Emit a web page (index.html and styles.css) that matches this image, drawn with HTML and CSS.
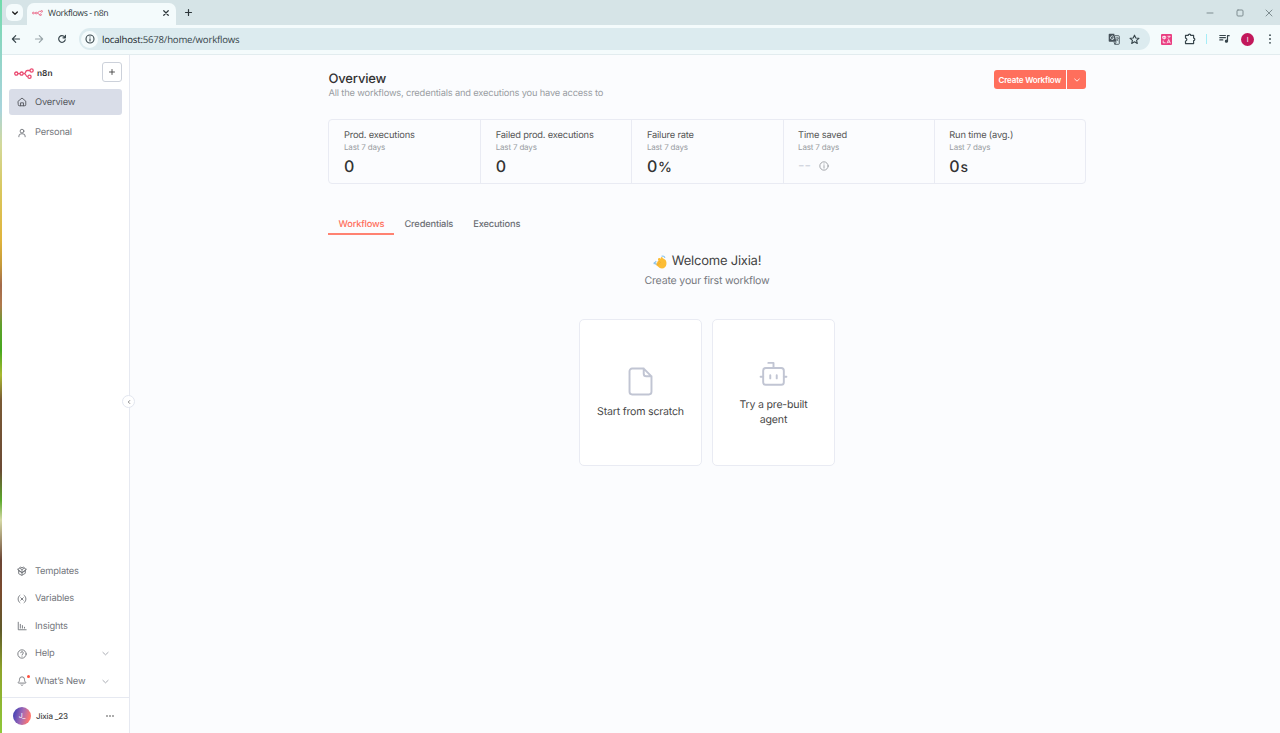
FILE: index.html
```
<!DOCTYPE html>
<html lang="en">
  <head>
    <meta charset="UTF-8" />
    <meta name="viewport" content="width=device-width, initial-scale=1.0" />
    <title>Workflows - n8n</title>
    <link rel="stylesheet" href="styles.css">
  </head>
  <body>
    <svg class="defs" width="0" height="0">
      <symbol id="logo" viewBox="0 0 20 11">
        <g fill="none" stroke="#ea4b71" stroke-width="1.3">
          <circle cx="2.300" cy="5.600" r="1.600" />
          <circle cx="7.600" cy="5.600" r="1.600" />
          <circle cx="17.600" cy="2.500" r="1.600" />
          <circle cx="15.500" cy="8.700" r="1.600" />
          <path d="M3.900 5.600H6M9.200 5.600h1c2 0 .6-3.100 3.200-3.100H16M10.200 5.600c2.500 0 .9 3.100 3.700 3.100" />
        </g>
      </symbol>
      <symbol id="chevron-down" viewBox="0 0 24 24">
        <path d="m5 9 7 6.500L19 9" />
      </symbol>
    </svg>

    <div class="desktop">
      <div class="browser">
        <div class="tab-bar">
          <button class="tab-search">
            <svg class="icon" width="8" height="8" viewBox="0 0 24 24" stroke-width="4"><path d="m5 9 7 7 7-7" /></svg>
          </button>
          <div class="tab">
            <svg width="11" height="6"><use href="#logo" /></svg>
            <span class="tab-title">Workflows - n8n</span>
            <svg class="icon" width="6" height="6" viewBox="0 0 8 8" stroke-width="1.6"><path d="m1 1 6 6M7 1 1 7" /></svg>
          </div>
          <svg class="icon new-tab" width="9" height="9" viewBox="0 0 9 9" stroke-width="1.2"><path d="M4.500 1.500v6M1.500 4.500h6" /></svg>
          <div class="window-buttons">
            <svg class="icon" width="8" height="8" viewBox="0 0 8 8"><path d="M1 4h6" /></svg>
            <svg class="icon" width="8" height="8" viewBox="0 0 8 8"><rect x="1" y="1" width="6" height="6" rx="1" /></svg>
            <svg class="icon" width="8" height="8" viewBox="0 0 8 8"><path d="m1 1 6 6M7 1 1 7" /></svg>
          </div>
        </div>

        <div class="toolbar">
          <svg class="icon back" width="10" height="10" viewBox="0 0 10 10" stroke-width="1.2"><path d="M8.500 5h-7M4.700 1.700 1.400 5l3.300 3.300" /></svg>
          <svg class="icon forward" width="10" height="10" viewBox="0 0 10 10" stroke-width="1.2"><path d="M1.500 5h7M5.300 1.700 8.600 5 5.300 8.300" /></svg>
          <svg class="icon reload" width="10" height="10" viewBox="0 0 10 10" stroke-width="1.2"><path d="M8.200 5.800A3.300 3.300 0 1 1 7.600 3l.7.7M8.400 1.400v2.400H6" /></svg>
          <div class="address">
            <span class="site-info">
              <svg class="icon" width="10" height="10" viewBox="0 0 10 10" stroke-width="1.1"><circle cx="5" cy="5" r="4" /><path d="M5 4.700v2.300M5 2.900v.1" /></svg>
            </span>
            <span class="url"><span class="host">localhost:</span>5678/home/workflows</span>
            <svg class="translate" width="12" height="12" viewBox="0 0 12 12">
              <path d="M1.500.7h4.700l2.300 8H1.500a.8.8 0 0 1-.8-.8V1.500a.8.8 0 0 1 .8-.8z" fill="#46525a" />
              <path d="M7 2.700h3.500a.8.8 0 0 1 .8.8v7a.8.8 0 0 1-.8.8H6.800l1.400-2.300M6.800 11.300 6 9" fill="none" stroke="#46525a" stroke-width=".9" />
              <path d="M5.700 3.900A1.700 1.700 0 1 0 5.900 5H4.400" fill="none" stroke="#dcebef" stroke-width=".9" />
              <path d="M7.700 5h3M9.200 4.200V5M10.300 5c-.3 1.400-1.200 2.200-2 2.700M8.300 6l2 2.200" fill="none" stroke="#46525a" stroke-width=".7" />
            </svg>
            <svg class="icon" width="11" height="11" viewBox="0 0 24 24" stroke-width="2.4"><path d="m12 2.500 2.800 6.300 6.900.6-5.200 4.500 1.600 6.700L12 17l-6.100 3.600 1.600-6.700-5.200-4.500 6.900-.6z" /></svg>
          </div>
          <svg class="extension" width="11" height="11" viewBox="0 0 11 11">
            <rect width="11" height="11" rx="1" fill="#ea3f82" />
            <path d="M1.700 2.500h3v1.800h-3zM3.200 1.700v3.800M6.500 2.300h2.700L7 4.500M2.200 6.500v2.300h2.300M6 9.300l1.700-3.800 1.700 3.800M6.700 8.200h2" fill="none" stroke="#fff" stroke-width=".8" />
          </svg>
          <svg class="icon puzzle" width="12" height="12" viewBox="0 0 12 12" stroke-width="1.2"><path d="M1.500 2.400h2.700c0-1.700 2.600-1.700 2.600 0h2.800v2.700c1.600 0 1.600 2.500 0 2.500v3H1.500V8c1.800 0 1.800-2.900 0-2.900z" /></svg>
          <span class="toolbar-divider"></span>
          <svg class="icon media" width="11" height="10" viewBox="0 0 11 10" stroke-width="1.2"><path d="M.8 1.500h5.600M.8 3.700h5.600M.8 5.900h3M8.500 7.200V1.700h1.700" /><circle cx="7.400" cy="7.200" r="1" fill="currentColor" /></svg>
          <span class="profile">I</span>
          <svg class="menu" width="4" height="10" viewBox="0 0 4 10"><circle cx="2" cy="1.200" r=".9" /><circle cx="2" cy="5" r=".9" /><circle cx="2" cy="8.800" r=".9" /></svg>
        </div>

        <div class="app">
          <aside class="sidebar">
            <div class="sidebar-header">
              <svg class="brand-logo" width="20" height="11"><use href="#logo" /></svg>
              <span class="brand">n8n</span>
              <button class="add-button">
                <svg class="icon" width="10" height="10" viewBox="0 0 10 10" stroke-width=".9"><path d="M5 2.500v5M2.500 5h5" /></svg>
              </button>
            </div>

            <nav class="nav-main">
              <a class="nav-item active">
                <svg class="icon" viewBox="0 0 24 24"><path d="M3 10 12 2.500 21 10v9a2 2 0 0 1-2 2H5a2 2 0 0 1-2-2zM8.500 21v-7h7v7" /></svg>
                <span>Overview</span>
              </a>
              <a class="nav-item">
                <svg class="icon" viewBox="0 0 24 24"><circle cx="12" cy="7.500" r="4.500" /><path d="M4.500 21v-1.500a5.500 5.500 0 0 1 5.500-5.500h4a5.500 5.500 0 0 1 5.500 5.500V21" /></svg>
                <span>Personal</span>
              </a>
            </nav>

            <nav class="nav-bottom">
              <a class="nav-item">
                <svg class="icon" viewBox="0 0 24 24"><path d="m12 22 8-4.500v-6L12 16l-8-4.500v6zM12 16v6M4 11.500 2 8l4-3 6 3.500L18 5l4 3-2 3.500M2 8l10 8L22 8M6 5l3-2.500 3 2 3-2L18 5M12 8.500V16" /></svg>
                <span>Templates</span>
              </a>
              <a class="nav-item">
                <svg class="icon" viewBox="0 0 24 24"><path d="M7 3C1 7 1 17 7 21M17 3c6 4 6 14 0 18M9 9l6 6M15 9l-6 6" /></svg>
                <span>Variables</span>
              </a>
              <a class="nav-item">
                <svg class="icon" viewBox="0 0 24 24"><path d="M3 3v18h19M8 8v9M13 11v6M18 15v2" /></svg>
                <span>Insights</span>
              </a>
              <a class="nav-item">
                <svg class="icon" viewBox="0 0 24 24"><circle cx="12" cy="12" r="10" /><path d="M9 9a3 3 0 0 1 6 .8c0 2-3 2.500-3 4M12 17v.3" /></svg>
                <span>Help</span>
                <svg class="icon arrow"><use href="#chevron-down" /></svg>
              </a>
              <a class="nav-item has-news">
                <svg class="icon" viewBox="0 0 24 24"><path d="M10 21.500a2.300 2.300 0 0 0 4 0M3.500 17c-.8 0-1-1-.5-1.500C4.500 14 6 12.500 6 8a6 6 0 0 1 12 0c0 4.500 1.500 6 3 7.500.5.5.3 1.500-.5 1.500z" /></svg>
                <span>What’s New</span>
                <svg class="icon arrow"><use href="#chevron-down" /></svg>
              </a>
            </nav>

            <div class="user">
              <span class="avatar">J_</span>
              <span class="user-name">Jixia _23</span>
              <svg class="menu" width="8" height="4" viewBox="0 0 8 4"><circle cx="1" cy="2" r=".8" /><circle cx="4" cy="2" r=".8" /><circle cx="7" cy="2" r=".8" /></svg>
            </div>

            <button class="collapse">
              <svg class="icon" width="6" height="6" viewBox="0 0 24 24" stroke-width="3.5"><path d="m15 6-6 6 6 6" /></svg>
            </button>
          </aside>

          <main class="content">
            <div class="page">
              <header class="page-header">
                <div>
                  <h1>Overview</h1>
                  <p class="subtitle">All the workflows, credentials and executions you have access to</p>
                </div>
                <div class="create">
                  <button class="create-main">Create Workflow</button>
                  <button class="create-more">
                    <svg class="icon" width="8" height="8" stroke-width="2.5"><use href="#chevron-down" /></svg>
                  </button>
                </div>
              </header>

              <ul class="insights">
                <li>
                  <strong>Prod. executions</strong>
                  <small>Last 7 days</small>
                  <div class="value">0</div>
                </li>
                <li>
                  <strong>Failed prod. executions</strong>
                  <small>Last 7 days</small>
                  <div class="value">0</div>
                </li>
                <li>
                  <strong>Failure rate</strong>
                  <small>Last 7 days</small>
                  <div class="value">0<em>%</em></div>
                </li>
                <li>
                  <strong>Time saved</strong>
                  <small>Last 7 days</small>
                  <div class="value empty">
                    <span>--</span>
                    <svg class="icon" width="10" height="10" viewBox="0 0 24 24"><circle cx="12" cy="12" r="10" /><path d="M12 11v6M12 7v.5" /></svg>
                  </div>
                </li>
                <li>
                  <strong>Run time (avg.)</strong>
                  <small>Last 7 days</small>
                  <div class="value">0<em>s</em></div>
                </li>
              </ul>

              <div class="tabs">
                <a class="selected">Workflows</a>
                <a>Credentials</a>
                <a>Executions</a>
              </div>

              <section class="welcome">
                <h2>
                  <svg width="14" height="14" viewBox="0 0 14 14">
                    <path d="M5.500 3.300c1-.6 1.700 0 2 .7l.4-1.500c.4-1 1.700-.7 1.600.4l2.400 1.600c1.300 1 1.800 2.600 1.500 4.700-.3 2.500-2 4.200-4.500 4.200-1.700 0-2.500-.8-3.600-1.700L3 9.900c-.8-.8 0-1.700.9-1.300-.7-.9.1-1.600.8-1.300-.5-.9.2-1.500.9-1.200-.7-1.100-.8-2.100-.1-2.800z" fill="#fcbd35" />
                    <path d="m5.800 6 2.300 1.800M4.900 7.500l2.300 1.600M4 8.900l2 1.400" stroke="#e99a21" stroke-width=".4" />
                    <path d="M.8 7.500 3.600 9.600M3.200 6.200.8 9.200M8.500 1.300c1.500-.5 3 0 3.400 1.500" fill="none" stroke="#8fc6ee" stroke-width="1.2" />
                  </svg>
                  Welcome Jixia!
                </h2>
                <p>Create your first workflow</p>
                <div class="cards">
                  <div class="card">
                    <svg class="icon" width="31" height="31" viewBox="0 0 24 24" stroke-width="1.5"><path d="M14.500 2H5.500a2 2 0 0 0-2 2v16a2 2 0 0 0 2 2h13a2 2 0 0 0 2-2V8zM14.500 2v4a2 2 0 0 0 2 2h4" /></svg>
                    <span>Start from scratch</span>
                  </div>
                  <div class="card">
                    <svg class="icon" width="31" height="31" viewBox="0 0 24 24" stroke-width="1.5"><path d="M12 7V3H8M2 13.800h2M20 13.800h2M9.500 12.500V15M14.500 12.500V15" /><rect x="4" y="7" width="16" height="13" rx="2" /></svg>
                    <span>Try a pre-built agent</span>
                  </div>
                </div>
              </section>
            </div>
          </main>
        </div>
      </div>
    </div>
  </body>
</html>
```

FILE: styles.css
```
* {
  box-sizing: border-box;
}
body {
  margin: 0;
  font-family: Inter, "Open Sans", sans-serif;
  font-size: 9.3px;
  letter-spacing: -0.17px;
  color: #555;
  text-rendering: geometricPrecision;
}
h1,
h2,
p,
ul {
  margin: 0;
  padding: 0;
}
button {
  display: flex;
  align-items: center;
  justify-content: center;
  padding: 0;
  border: none;
  font-family: inherit;
  letter-spacing: inherit;
}
svg {
  flex-shrink: 0;
}
.defs {
  position: absolute;
}
.icon {
  fill: none;
  stroke: currentColor;
  stroke-linecap: round;
  stroke-linejoin: round;
}
.menu {
  fill: currentColor;
}

/* wallpaper visible to the left of the window */
.desktop {
  height: 733px;
  padding-left: 2px;
  overflow: hidden;
  background: linear-gradient(#6fdcab 0, #8fd5c5 50px, #a9d4dc 110px, #d3d99a 145px, #d9c75e 190px, #e0b43c 240px, #c59a3a 265px, #a36a4b 285px, #b0794c 305px, #5fa02c 325px, #46a81e 350px, #a9b930 375px, #7a5a35 400px, #6b4a35 470px, #5aa82a 500px, #d5d9a5 520px, #6b4535 560px, #7a4a2e 590px, #5f5a2a 630px, #8ea52a 670px, #8fc83a 733px);
}
.browser {
  display: flex;
  flex-direction: column;
  height: 100%;
  background: #fbfcfe;
}

/* browser chrome */
.tab-bar {
  display: flex;
  align-items: center;
  height: 25px;
  padding: 0 7px 0 4px;
  background: #d6e4e7;
  color: #2c363a;
}
.tab-search {
  width: 17px;
  height: 17px;
  border-radius: 6px;
  background: #f4fbfc;
  color: #222;
}
.tab {
  display: flex;
  align-items: center;
  align-self: flex-end;
  width: 149px;
  height: 22px;
  margin-left: 4px;
  padding: 0 7px 2px 5px;
  border-radius: 7px 7px 0 0;
  background: #f4fbfc;
}
.tab-title {
  flex: 1;
  margin-left: 5px;
  font-family: "Open Sans", sans-serif;
  font-size: 8.7px;
  letter-spacing: -0.35px;
}
.new-tab {
  margin-left: 8px;
}
.window-buttons {
  display: flex;
  gap: 21.5px;
  margin-left: auto;
  color: #7f8d91;
}
.toolbar {
  display: flex;
  align-items: center;
  height: 30px;
  padding: 0 8px 1px 9px;
  border-bottom: 1px solid #e2ecef;
  background: #f4fbfc;
  color: #37454b;
}
.forward {
  margin-left: 13px;
  color: #9aa6aa;
}
.reload {
  margin-left: 13px;
}
.address {
  display: flex;
  align-items: center;
  width: 1071px;
  height: 22px;
  margin-left: 12px;
  padding: 0 10px 0 2px;
  border-radius: 11px;
  background: #dcebef;
}
.site-info {
  display: flex;
  align-items: center;
  justify-content: center;
  width: 17px;
  height: 17px;
  border-radius: 50%;
  background: #f4fbfc;
}
.url {
  flex: 1;
  margin-left: 4px;
  font-family: "Open Sans", sans-serif;
  font-size: 9.6px;
  letter-spacing: -0.2px;
}
.host {
  color: #18252a;
}
.translate {
  margin-right: 9px;
}
.extension {
  margin-left: 11px;
}
.puzzle {
  margin-left: 12px;
}
.toolbar-divider {
  width: 1.5px;
  height: 10px;
  margin-left: 10px;
  background: #a5edf7;
}
.media {
  margin-left: 12px;
}
.profile {
  width: 13px;
  height: 13px;
  margin: 0 14px 0 11px;
  border-radius: 50%;
  background: #c2185b;
  color: #fff;
  font-size: 7px;
  line-height: 13px;
  text-align: center;
}

/* n8n */
.app {
  display: flex;
  flex: 1;
  min-height: 0;
}
.sidebar {
  position: relative;
  display: flex;
  flex-direction: column;
  width: 128px;
  border-right: 1px solid #e6e9f1;
  background: #fff;
}
.sidebar-header {
  display: flex;
  align-items: center;
  padding: 7px 7px 7px 12px;
}
.brand-logo {
  margin-top: 2px;
}
.brand {
  flex: 1;
  margin-left: 3px;
  padding-top: 3px;
  color: #333;
  font-size: 8.3px;
  font-weight: 600;
  letter-spacing: 0;
}
.add-button {
  width: 20px;
  height: 20px;
  border: 1px solid #ccd1da;
  border-radius: 3px;
  background: #fff;
  color: #444;
}
.nav-main {
  display: flex;
  flex-direction: column;
  gap: 4.5px;
  padding: 0 7px;
}
.nav-item {
  display: flex;
  align-items: center;
  height: 26px;
  padding: 0 12px 0 8px;
  border-radius: 3px;
  color: #73767c;
}
.nav-item span {
  line-height: 13px;
}
.nav-item .icon {
  width: 10px;
  height: 10px;
  margin-right: 8px;
  stroke-width: 2.2;
}
.nav-item .arrow {
  width: 9px;
  height: 9px;
  margin: 0 0 0 auto;
  color: #999da5;
}
.nav-item.active {
  background: #d9dde8;
  color: #55585e;
}
.nav-bottom {
  display: flex;
  flex-direction: column;
  gap: 1.45px;
  margin-top: auto;
  padding: 0 7px 3px;
}
.has-news {
  position: relative;
}
.has-news::before {
  content: "";
  position: absolute;
  top: 7px;
  left: 18px;
  width: 3px;
  height: 3px;
  border-radius: 50%;
  background: #ff4f3d;
}
.user {
  display: flex;
  align-items: center;
  height: 36px;
  padding: 0 15px 0 11px;
  border-top: 1px solid #e6e9f1;
  color: #444;
}
.avatar {
  width: 18px;
  height: 18px;
  margin-right: 5px;
  border-radius: 50%;
  background: linear-gradient(105deg, #5148b5 15%, #a56bb5 50%, #ff766f 85%);
  color: #fff;
  font-size: 7px;
  line-height: 18px;
  text-align: center;
}
.user-name {
  flex: 1;
  padding-top: 1px;
  font-size: 8px;
  font-weight: 500;
}
.collapse {
  position: absolute;
  top: 340px;
  right: -6px;
  width: 13px;
  height: 13px;
  border: 1px solid #e2e6ef;
  border-radius: 50%;
  background: #fff;
  color: #777;
}

.content {
  flex: 1;
}
.page {
  width: 758px;
  margin: 15px 0 0 198px;
}
.page-header {
  display: flex;
  justify-content: space-between;
  height: 49px;
}
h1 {
  padding: 1px 0 0 0.5px;
  color: #333;
  font-size: 13px;
  font-weight: 500;
  line-height: 16px;
}
.subtitle {
  padding-left: 0.5px;
  color: #999ca2;
  font-size: 9.3px;
  line-height: 13px;
}
.create {
  display: flex;
  gap: 1px;
}
.create button {
  height: 19px;
  background: #ff6f5c;
  color: #fff;
}
.create .create-main {
  width: 72.5px;
  border-radius: 3px 0 0 3px;
  font-size: 8px;
  font-weight: 600;
}
.create .create-more {
  width: 19px;
  border-radius: 0 3px 3px 0;
}
.insights {
  display: grid;
  grid-template-columns: repeat(5, 1fr);
  height: 65px;
  border: 1px solid #e9ebf3;
  border-radius: 4px;
  list-style: none;
}
.insights li {
  padding: 9px 0 0 14.5px;
  border-left: 1px solid #e9ebf3;
}
.insights li:first-child {
  padding-left: 15px;
  border-left: none;
}
.insights strong,
.insights small {
  display: block;
}
.insights strong {
  font-size: 9.3px;
  font-weight: 400;
  line-height: 13px;
  white-space: nowrap;
}
.insights small {
  color: #999ca2;
  font-size: 8px;
  line-height: 10px;
}
.value {
  margin-top: 4px;
  color: #333;
  font-size: 16px;
  font-weight: 500;
  line-height: 20px;
}
.value em {
  margin-left: 1px;
  font-size: 14px;
  font-style: normal;
}
.empty {
  display: flex;
  align-items: center;
  gap: 8px;
  color: #d3d7e0;
  font-size: 14px;
}
.empty .icon {
  color: #888b91;
  stroke-width: 1.8;
}
.tabs {
  display: flex;
  margin-top: 30px;
}
.tabs a {
  height: 21px;
  padding: 1px 10px 0;
  border-bottom: 2px solid transparent;
  color: #6d7076;
  font-size: 9.3px;
  font-weight: 500;
  line-height: 20px;
}
.tabs .selected {
  padding-left: 10.5px;
  border-color: #ff8271;
  color: #ff6f5c;
}
.welcome {
  margin-top: 17px;
  text-align: center;
}
.welcome h2 {
  display: flex;
  align-items: center;
  justify-content: center;
  gap: 5px;
  color: #444;
  font-size: 13px;
  font-weight: 400;
  letter-spacing: -0.23px;
  line-height: 19px;
}
.welcome p {
  margin-top: 2px;
  color: #77797e;
  font-size: 10.6px;
  letter-spacing: -0.2px;
  line-height: 16px;
}
.cards {
  display: flex;
  justify-content: center;
  gap: 10px;
  margin-top: 30px;
}
.card {
  display: flex;
  flex-direction: column;
  align-items: center;
  justify-content: center;
  width: 123px;
  height: 147px;
  padding: 0 14px;
  border: 1px solid #e9ebf3;
  border-radius: 5px;
  background: #fff;
  color: #484848;
  font-size: 10.6px;
  letter-spacing: -0.2px;
  line-height: 15px;
}
.card .icon {
  margin-bottom: 7px;
  color: #c1c5d3;
}
```
